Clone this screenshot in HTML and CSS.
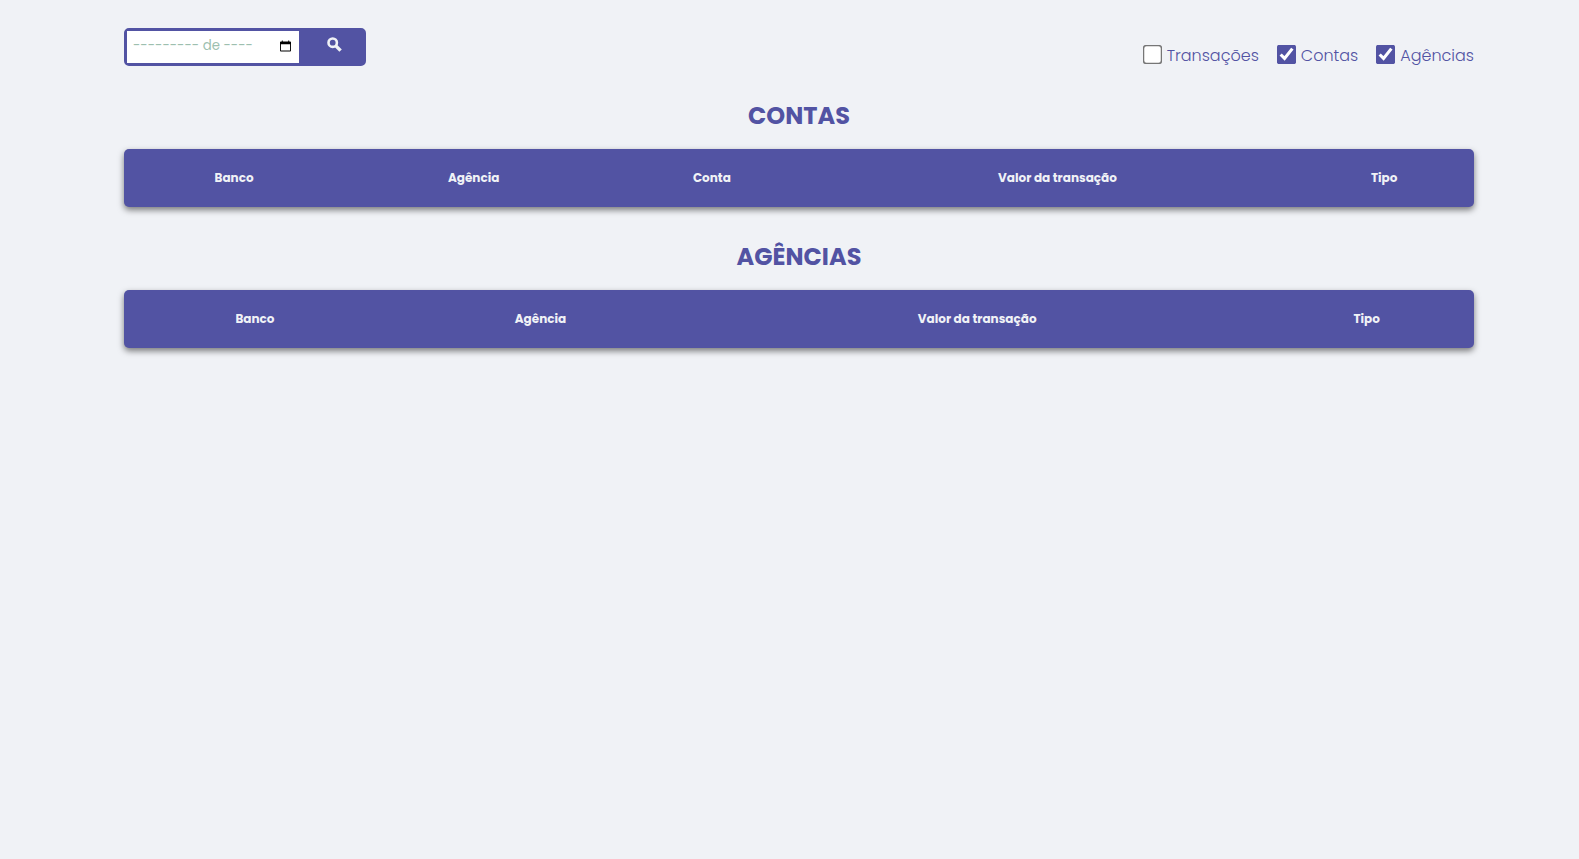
FILE: index.html
```html
<!DOCTYPE html>
<html lang="pt-BR">
<head>
<meta charset="utf-8">
<title>Transações suspeitas</title>
<link rel="stylesheet" href="styles.css">
</head>
<body>
<main class="page">
  <div class="toolbar">
    <form class="search">
      <div class="month">
        <input class="month-input" type="text" aria-label="Mês" placeholder="--------- de ----">
        <svg class="month-icon" viewBox="0 0 12 12" aria-hidden="true"><path fill="#000" fill-rule="evenodd" d="M1 1h1V0h1v1h6V0h1v1h1q1 0 1 1v9q0 1-1 1H1q-1 0-1-1V2q0-1 1-1zm0 3v7h10V4z"/></svg>
      </div>
      <button class="search-button" type="button" aria-label="Buscar">
        <svg class="search-icon" viewBox="0 0 15 15" aria-hidden="true"><circle cx="5.7" cy="5.7" r="4.2" fill="none" stroke="currentColor" stroke-width="2.6"/><path d="M8.6 8.6l5 5" stroke="currentColor" stroke-width="3.4"/></svg>
      </button>
    </form>
    <div class="filters">
      <label class="filter"><input class="check" type="checkbox">Transações</label>
      <label class="filter"><input class="check" type="checkbox" checked>Contas</label>
      <label class="filter"><input class="check" type="checkbox" checked>Agências</label>
    </div>
  </div>
  <section class="report">
    <h2 class="title">CONTAS</h2>
    <table class="table accounts">
      <thead><tr><th class="bank">Banco</th><th class="agency">Agência</th><th class="account">Conta</th><th class="amount">Valor da transação</th><th class="kind">Tipo</th></tr></thead>
    </table>
  </section>
  <section class="report">
    <h2 class="title">AGÊNCIAS</h2>
    <table class="table agencies">
      <thead><tr><th class="bank">Banco</th><th class="agency">Agência</th><th class="amount">Valor da transação</th><th class="kind">Tipo</th></tr></thead>
    </table>
  </section>
</main>
</body>
</html>
```
FILE: styles.css
```css
* { box-sizing: border-box; }
body {
  margin: 0;
  background: #f0f2f6;
  color: #5253a3;
  font-family: Poppins, Inter, "Open Sans", sans-serif;
  font-size: 16px;
}
.page { padding: 28px 105px 28px 124px; }
.toolbar { display: flex; justify-content: space-between; align-items: flex-start; }
.search {
  display: flex;
  height: 38px;
  border: 3px solid #5253a3;
  border-radius: 5px;
  background: #5253a3;
}
.month { display: flex; align-items: center; width: 172px; padding: 0 8px 2px 6px; background: #fff; }
.month-input {
  flex: 1;
  min-width: 0;
  padding: 0;
  border: 0;
  outline: 0;
  background: transparent;
  color: #9dbfaf;
  font-family: Poppins, Inter, sans-serif;
}
.month-input::placeholder { color: #9dbfaf; opacity: 1; }
.month-icon { width: 11px; height: 12px; }
.search-button {
  width: 64px;
  padding: 0 0 2px 6px;
  border: 0;
  background: #5253a3;
  color: #f0f2f6;
}
.search-icon { width: 15px; height: 15px; }
.filters { display: flex; gap: 17px; padding-top: 15px; }
.filter { display: flex; align-items: flex-start; gap: 5px; line-height: 26px; font-weight: 300; }
.check { width: 13px; height: 13px; margin: 5px 3px 5px 4px; accent-color: #5253a3; transform: scale(1.5); }
.report { padding-top: 29px; }
.report + .report { padding-top: 32px; }
.title { margin: 0 0 15px; font-size: 24px; line-height: 36px; font-weight: 700; text-align: center; }
.table {
  width: 100%;
  table-layout: fixed;
  border-collapse: collapse;
  border-radius: 5px;
  background: #5253a3;
  color: #f0f2f6;
  box-shadow: 0 3px 6px rgba(0, 0, 0, 0.5);
}
.table th { height: 58px; padding: 0; font-size: 12px; font-weight: 700; }
.accounts .bank { width: 16.3%; }
.accounts .agency { width: 19.2%; }
.accounts .account { width: 16.1%; }
.accounts .amount { width: 35.1%; }
.agencies .bank { width: 19.4%; }
.agencies .agency { width: 22.9%; }
.agencies .amount { width: 41.8%; }
```
